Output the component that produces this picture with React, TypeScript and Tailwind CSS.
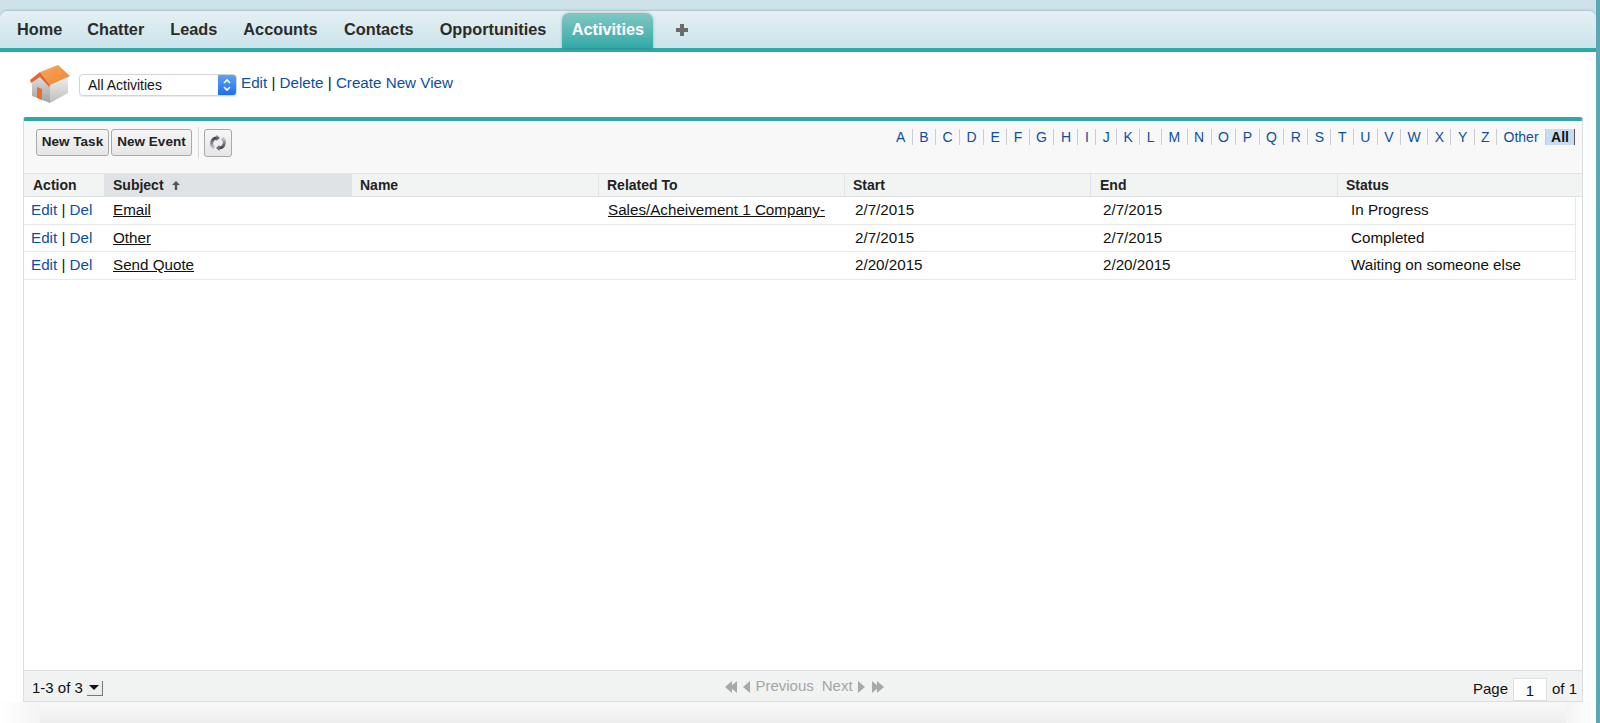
import { type ReactNode } from 'react';

const NAV = [
  { label: 'Home', cls: 'ml-[17px]' },
  { label: 'Chatter', cls: 'ml-[25px]' },
  { label: 'Leads', cls: 'ml-[26px]' },
  { label: 'Accounts', cls: 'ml-[26px]' },
  { label: 'Contacts', cls: 'ml-[26.5px]' },
  { label: 'Opportunities', cls: 'ml-[26px]' },
];

const LETTERS = 'ABCDEFGHIJKLMNOPQRSTUVWXYZ'.split('').concat('Other');

const ROWS = [
  { subject: 'Email', related: 'Sales/Acheivement 1 Company-', start: '2/7/2015', end: '2/7/2015', status: 'In Progress' },
  { subject: 'Other', related: '', start: '2/7/2015', end: '2/7/2015', status: 'Completed' },
  { subject: 'Send Quote', related: '', start: '2/20/2015', end: '2/20/2015', status: 'Waiting on someone else' },
];

function House() {
  return (
    <svg width="42" height="40" viewBox="0 0 42 40" className="shrink-0">
      <defs>
        <linearGradient id="roof" x1="0" y1="0" x2="1" y2="1">
          <stop offset="0" stopColor="#f7a95a" />
          <stop offset="1" stopColor="#ef8433" />
        </linearGradient>
        <linearGradient id="wall" x1="0" y1="0" x2="0" y2="1">
          <stop offset="0" stopColor="#f0f0f0" />
          <stop offset="1" stopColor="#bdbdbd" />
        </linearGradient>
        <linearGradient id="front" x1="0" y1="0" x2="0" y2="1">
          <stop offset="0" stopColor="#e4e4e4" />
          <stop offset="1" stopColor="#a2a2a2" />
        </linearGradient>
      </defs>
      <path d="M3 14 L11 8 L21 19 L21 38 L3 31 Z" fill="url(#front)" />
      <path d="M21 19 L39 11 L39 28 L21 38 Z" fill="url(#wall)" />
      <path d="M11 7 L29 0 L41 11 L21 20 Z" fill="url(#roof)" />
      <path d="M11 7 L21 20 L20 22 L11 12 L2 18 L1 15 Z" fill="#e9662b" />
      <path d="M8 22 L13 24 L13 35 L8 33 Z" fill="#ea6f2f" />
    </svg>
  );
}

function ViewSelect() {
  return (
    <div className="ml-[8px] flex h-[22px] w-[158px] items-stretch overflow-hidden rounded-[4px] border border-[#d4d4d4] bg-white shadow-[0_1px_1px_rgba(0,0,0,0.08)]">
      <span className="flex-1 pl-[8px] text-[14px] leading-[20px] text-[#111]">All Activities</span>
      <span className="flex w-[18px] items-center justify-center bg-gradient-to-b from-[#5aa2f5] to-[#1c6fe8]">
        <svg width="10" height="16" viewBox="0 0 10 16" fill="none" stroke="#fff" strokeWidth="1.6">
          <path d="M2 6 L5 3 L8 6" />
          <path d="M2 10 L5 13 L8 10" />
        </svg>
      </span>
    </div>
  );
}

function Btn({ children }: { children: ReactNode }) {
  return (
    <button className="flex h-[27px] items-center justify-center rounded-[3px] border border-[#a9a9a9] bg-gradient-to-b from-[#f6f6f6] to-[#e6e6e6] text-[13.5px] font-bold text-[#222]">
      {children}
    </button>
  );
}

function RefreshIcon() {
  return (
    <svg width="18" height="18" viewBox="0 0 18 18" fill="none">
      <defs>
        <linearGradient id="arcL" x1="0" y1="0" x2="0" y2="1">
          <stop offset="0" stopColor="#3f4450" />
          <stop offset="1" stopColor="#c9c9c9" />
        </linearGradient>
        <linearGradient id="arcR" x1="0" y1="1" x2="0" y2="0">
          <stop offset="0" stopColor="#3f4450" />
          <stop offset="1" stopColor="#c9c9c9" />
        </linearGradient>
      </defs>
      <path d="M8 4 A5.5 5.5 0 0 0 5 14" stroke="url(#arcL)" strokeWidth="3" />
      <path d="M7.5 1 L7.5 7 L11 4 Z" fill="#6d7078" />
      <path d="M10 14 A5.5 5.5 0 0 0 13 4" stroke="url(#arcR)" strokeWidth="3" />
      <path d="M10.5 11 L10.5 17 L7 14 Z" fill="#6d7078" />
    </svg>
  );
}

function Arrow({ dir, double }: { dir: 'left' | 'right'; double?: boolean }) {
  const d = dir === 'left' ? 'M7 0 L7 12 L0 6 Z' : 'M0 0 L0 12 L7 6 Z';
  const d2 = dir === 'left' ? 'M12 0 L12 12 L5 6 Z' : 'M5 0 L5 12 L12 6 Z';
  return (
    <svg width={double ? 12 : 8} height="12" viewBox={double ? '0 0 12 12' : '0 0 8 12'} fill="#a8a8a8">
      <path d={d} />
      {double && <path d={d2} />}
    </svg>
  );
}

export default function App() {
  return (
    <div className="flex h-[723px] w-[1600px] overflow-hidden bg-[#cfe2e9] font-['Liberation_Sans',Arial,sans-serif] text-[#111]">
      <div className="flex min-w-0 flex-1 flex-col">
        {/* Tabs */}
        <div className="mt-[11px] flex h-[41px] shrink-0 items-end rounded-t-[7px] border-b-[4px] border-[#2ea9a7] bg-gradient-to-b from-[#e4f0f4] to-[#cbe4eb] shadow-[0_-1px_2px_rgba(90,130,150,0.35)]">
          {NAV.map((n) => (
            <span key={n.label} className={`${n.cls} h-[37px] text-[16.3px] leading-[37px] font-bold text-[#2b2b2b]`}>
              {n.label}
            </span>
          ))}
          <span className="ml-[16px] h-[35px] w-[91px] rounded-t-[7px] bg-gradient-to-b from-[#7fc8c4] to-[#2fa9a6] text-center text-[16.3px] leading-[33px] font-bold text-white shadow-[0_0_3px_rgba(0,0,0,0.25)]">
            Activities
          </span>
          <span className="mb-[12px] ml-[22px] flex h-[13px] w-[13px] items-center justify-center">
            <svg width="12" height="12" viewBox="0 0 12 12" fill="#6b6b6b">
              <path d="M4 0 H8 V4 H12 V8 H8 V12 H4 V8 H0 V4 H4 Z" />
            </svg>
          </span>
        </div>

        {/* Body */}
        <div className="flex min-h-0 flex-1 flex-col bg-white pr-[13px] pl-[23px]">
          <div className="flex h-[65px] shrink-0 items-start pt-[13px] pl-[6px]">
            <House />
            <div className="mt-[9px] flex items-center">
              <ViewSelect />
              <div className="mt-[-4px] ml-[4px] text-[15.2px] leading-[22px] text-[#111]">
                <a className="text-[#0b4fa3]">Edit</a> | <a className="text-[#0b4fa3]">Delete</a> |{' '}
                <a className="text-[#0b4fa3]">Create New View</a>
              </div>
            </div>
          </div>

          {/* Panel */}
          <div className="flex min-h-0 flex-1 flex-col rounded-t-[3px] border-x border-b border-t-[4px] border-x-[#dcdedf] border-b-[#dcdedf] border-t-[#2ea9a7] bg-white">
            <div className="flex h-[52px] shrink-0 justify-between bg-[#f8f8f8]">
              <div className="flex items-start pt-[8px] pl-[12px]">
                <Btn>
                  <span className="w-[71px]">New Task</span>
                </Btn>
                <span className="ml-[2px]">
                  <Btn>
                    <span className="w-[79px]">New Event</span>
                  </Btn>
                </span>
                <span className="mt-[-2px] ml-[6px] h-[31px] w-px bg-[#d8d8d8]" />
                <span className="ml-[5px]">
                  <button className="flex h-[28px] w-[28px] items-center justify-center rounded-[3px] border border-[#a9a9a9] bg-gradient-to-b from-[#f6f6f6] to-[#e6e6e6]">
                    <RefreshIcon />
                  </button>
                </span>
              </div>
              <div className="mt-[8px] flex h-[16px] items-center pr-[7px]">
                {LETTERS.map((l) => (
                  <a key={l} className="border-r border-[#c9ced3] px-[6.45px] text-[14px] leading-[16px] text-[#0b4fa3]">
                    {l}
                  </a>
                ))}
                <span className="w-[29px] border-r border-[#555] bg-[#c6dcf2] text-center text-[14px] leading-[16px] font-bold text-[#111]">
                  All
                </span>
              </div>
            </div>

            {/* Header */}
            <div className="grid h-[24px] shrink-0 grid-cols-[81px_247px_247px_246px_246px_247px_1fr] border-y border-[#e0e3e5] bg-[#f2f3f3] text-[14px] leading-[23px] font-bold text-[#222]">
              <span className="border-r border-[#e0e3e5] pl-[9px]">Action</span>
              <span className="flex items-center bg-[#dfe3e6] pl-[8px]">
                Subject
                <svg className="ml-[8px]" width="8" height="9" viewBox="0 0 8 9" fill="#555">
                  <path d="M4 0 L8 4 H5.2 V9 H2.8 V4 H0 Z" />
                </svg>
              </span>
              <span className="border-r border-[#e0e3e5] pl-[8px]">Name</span>
              <span className="border-r border-[#e0e3e5] pl-[8px]">Related To</span>
              <span className="border-r border-[#e0e3e5] pl-[8px]">Start</span>
              <span className="border-r border-[#e0e3e5] pl-[9px]">End</span>
              <span className="pl-[8px]">Status</span>
            </div>

            {/* Rows */}
            <div className="mr-[6px] flex-1">
              {ROWS.map((r) => (
                <div
                  key={r.subject}
                  className="grid h-[27.5px] grid-cols-[81px_247px_247px_246px_246px_247px_1fr] items-center border-r border-b border-[#e6e8e9] pt-[1px] text-[15.2px] text-[#111]"
                >
                  <span className="pl-[7px]">
                    <a className="text-[#0b4fa3]">Edit</a> | <a className="text-[#0b4fa3]">Del</a>
                  </span>
                  <span className="pl-[8px]">
                    <a className="underline">{r.subject}</a>
                  </span>
                  <span />
                  <span className="pl-[9px]">{r.related && <a className="underline">{r.related}</a>}</span>
                  <span className="pl-[10px]">{r.start}</span>
                  <span className="pl-[12px]">{r.end}</span>
                  <span className="pl-[13px]">{r.status}</span>
                </div>
              ))}
            </div>

            {/* Footer */}
            <div className="flex h-[31px] shrink-0 items-center border-t border-[#dcdedf] bg-[#f1f2f2] text-[15px]">
              <div className="flex flex-1 items-center pt-[4px] pl-[8px]">
                1-3 of 3
                <span className="ml-[4px] flex h-[15px] w-[16px] items-center justify-center border-r border-b border-[#777] bg-[#eee]">
                  <svg width="10" height="5" viewBox="0 0 10 5" fill="#111">
                    <path d="M0 0 H10 L5 5 Z" />
                  </svg>
                </span>
              </div>
              <div className="flex items-center pt-[1px] text-[#a5a5a5]">
                <Arrow dir="left" double />
                <span className="ml-[6px]">
                  <Arrow dir="left" />
                </span>
                <span className="ml-[4px]">Previous</span>
                <span className="ml-[8px]">Next</span>
                <span className="ml-[5px]">
                  <Arrow dir="right" />
                </span>
                <span className="ml-[6px]">
                  <Arrow dir="right" double />
                </span>
              </div>
              <div className="flex flex-1 items-center justify-end pt-[6px] pr-[5px]">
                Page
                <span className="mx-[5px] h-[23px] w-[34px] border border-[#dcdedf] bg-white text-center leading-[23px]">1</span>
                of 1
              </div>
            </div>
          </div>

          {/* Page bottom shade */}
          <div className="mr-[-13px] ml-[-23px] flex h-[21px] shrink-0">
            <div className="w-[40px] bg-gradient-to-r from-white to-[#f4f4f4]" />
            <div className="flex-1 bg-gradient-to-b from-[#f9f9f9] to-[#eeeeee]" />
            <div className="w-[30px] bg-gradient-to-l from-white to-[#f4f4f4]" />
          </div>
        </div>
      </div>
      <div className="w-[4px] shrink-0 bg-[#5ba8b5]" />
    </div>
  );
}
